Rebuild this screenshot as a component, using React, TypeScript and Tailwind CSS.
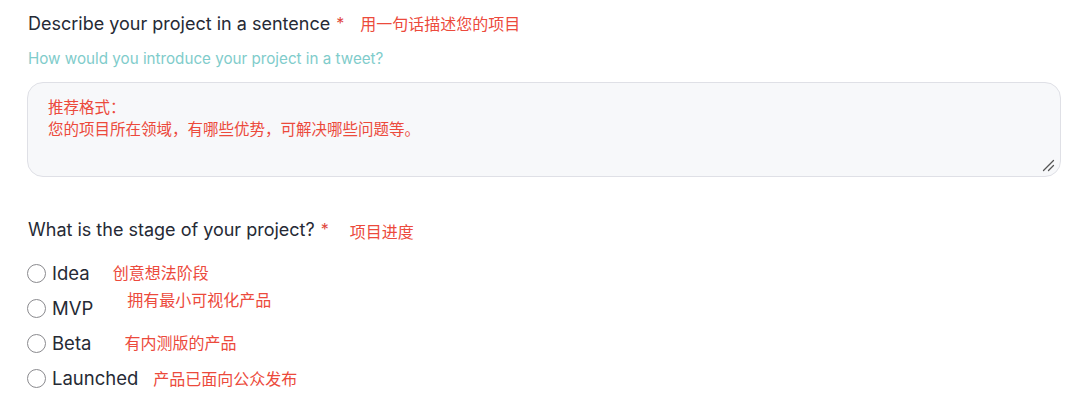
import React from 'react';

const stages = [
  { label: 'Idea', note: '创意想法阶段', gap: 'ml-[23px]', shift: '-mt-[3px]' },
  { label: 'MVP', note: '拥有最小可视化产品', gap: 'ml-[34px]', shift: '-mt-[18px]' },
  { label: 'Beta', note: '有内测版的产品', gap: 'ml-[33px]', shift: '-mt-[3px]' },
  { label: 'Launched', note: '产品已面向公众发布', gap: 'ml-[15px]', shift: 'mt-0' },
];

const cn = "font-['Noto_Sans_CJK_SC',sans-serif]";

function Radio() {
  return <span className="w-[19px] h-[19px] rounded-full border-[1.5px] border-[#8a8a8e] bg-white shrink-0" />;
}

export default function App() {
  return (
    <div className="w-[1080px] h-[413px] bg-white font-['Inter',sans-serif] text-[#262a35] pl-[28px] pr-[20px] pt-[11px] overflow-hidden">
      <div className="flex items-center h-[24px]">
        <span className="text-[18px]">Describe your project in a sentence</span>
        <span className="text-[#e0483e] text-[16px] ml-[6px]">*</span>
        <span className={`${cn} text-[#ec4a3c] text-[16px] ml-[16px]`}>用一句话描述您的项目</span>
      </div>
      <div className="mt-[13px] text-[15.2px] text-[#7fcccb] h-[22px] leading-[22px]">
        How would you introduce your project in a tweet?
      </div>
      <div className="mt-[12px] -ml-[1px] w-[1034px] h-[95px] rounded-[16px] border border-[#dfe0e6] bg-[#f7f8fa] relative pl-[20px] pt-[12px]">
        <div className={`${cn} text-[#ec4a3c] text-[15.5px] leading-[22px]`}>
          <div>推荐格式：</div>
          <div>您的项目所在领域，有哪些优势，可解决哪些问题等。</div>
        </div>
        <svg className="absolute right-[5px] bottom-[4px]" width="14" height="14" viewBox="0 0 14 14">
          <path d="M12.5 2.5 L2.5 12.5 M12.5 7.5 L7.5 12.5" stroke="#555" strokeWidth="1.3" strokeLinecap="round" />
        </svg>
      </div>
      <div className="flex items-center mt-[40px] h-[24px]">
        <span className="text-[18px]">What is the stage of your project?</span>
        <span className="text-[#e0483e] text-[16px] ml-[6px]">*</span>
        <span className={`${cn} text-[#ec4a3c] text-[16px] ml-[21px] mt-[4px]`}>项目进度</span>
      </div>
      <div className="mt-[23px] flex flex-col gap-[16px] -ml-[1px]">
        {stages.map((s) => (
          <div key={s.label} className="flex items-center h-[19px]">
            <Radio />
            <span className="ml-[6px] text-[18.5px] leading-[19px]">{s.label}</span>
            <span className={`${cn} ${s.gap} ${s.shift} text-[#ec4a3c] text-[16px] leading-[19px]`}>{s.note}</span>
          </div>
        ))}
      </div>
    </div>
  );
}
